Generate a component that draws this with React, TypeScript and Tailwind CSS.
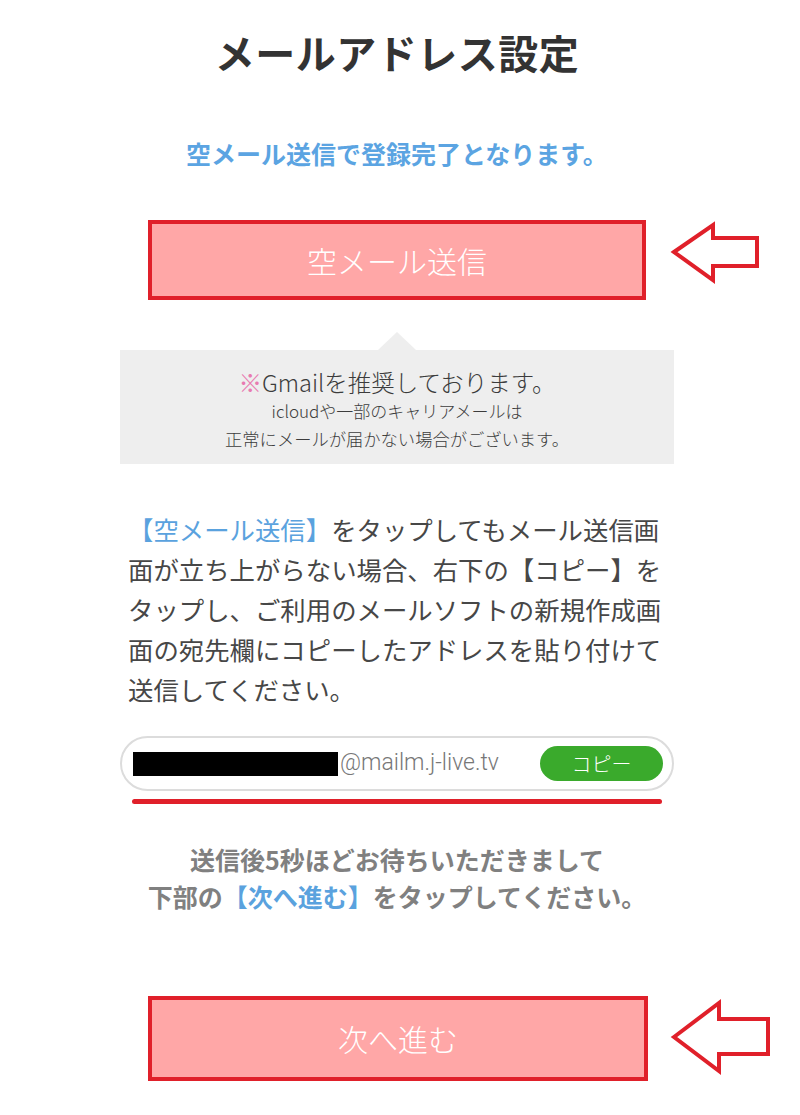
import React from "react";

const jp = { fontFamily: '"Noto Sans CJK JP", "Noto Sans", sans-serif' };

function Arrow1() {
  return (
    <svg width="92" height="80" viewBox="0 0 92 80" className="ml-[24px] shrink-0">
      <polygon
        points="4,32 43,5 43,18 87,18 87,46 43,46 43,60"
        fill="#ffffff"
        stroke="#e0202a"
        strokeWidth="4"
        strokeLinejoin="miter"
      />
    </svg>
  );
}

function Arrow2() {
  return (
    <svg width="102" height="85" viewBox="0 0 102 85" className="ml-[22px] shrink-0">
      <polygon
        points="4,41 49,7 49,23 98,23 98,58 49,58 49,75"
        fill="#ffffff"
        stroke="#e0202a"
        strokeWidth="4"
        strokeLinejoin="miter"
      />
    </svg>
  );
}

export default function App() {
  return (
    <div className="w-[800px] h-[1115px] bg-white overflow-hidden" style={jp}>
      <div className="w-[794px] flex flex-col items-center">
        <h1 className="pt-[28px] text-[40px] leading-[48px] font-bold text-[#333333] tracking-[0.5px]">
          メールアドレス設定
        </h1>
        <p className="mt-[61px] text-[25px] leading-[32px] font-bold text-[#5ba4e2]">
          空メール送信で登録完了となります。
        </p>

        <div className="mt-[51px] w-full flex items-center pl-[148px]">
          <div className="w-[498px] h-[80px] bg-[#ffa7a7] border-[4px] border-[#e0202a] flex items-center justify-center">
            <span className="text-[30px] text-white font-light">空メール送信</span>
          </div>
          <Arrow1 />
        </div>

        <div className="mt-[32px] w-[554px] flex flex-col items-center">
          <div className="w-0 h-0 border-l-[19px] border-r-[19px] border-b-[18px] border-l-transparent border-r-transparent border-b-[#eeeeee]" />
          <div className="w-[554px] bg-[#eeeeee] pt-[17px] pb-[11px] flex flex-col items-center text-[#3c3c3c]">
            <p className="text-[23.5px] leading-[30px] font-light">
              <span className="text-[#e87ab0]">※</span>Gmailを推奨しております。
            </p>
            <p className="text-[17px] leading-[28px] font-light">icloudや一部のキャリアメールは</p>
            <p className="text-[17.3px] leading-[28px] font-light">正常にメールが届かない場合がございます。</p>
          </div>
        </div>

        <div className="mt-[45px] w-[554px] pl-[8px] text-[25.4px] leading-[40px] text-[#474747] whitespace-nowrap">
          <span className="text-[#5aa2de]">【空メール送信】</span>をタップしてもメール送信画
          <br />
          面が立ち上がらない場合、右下の【コピー】を
          <br />
          タップし、ご利用のメールソフトの新規作成画
          <br />
          面の宛先欄にコピーしたアドレスを貼り付けて
          <br />
          送信してください。
        </div>

        <div className="mt-[27px] w-[554px] h-[55px] rounded-full border-2 border-[#dcdcdc] bg-white flex items-center pl-[11px] pr-[9px]">
          <div className="w-[205px] h-[24px] bg-black shrink-0" />
          <span
            className="ml-[2px] text-[23px] text-[#777777] font-light"
            style={{ fontFamily: 'Roboto, "Noto Sans CJK JP", sans-serif' }}
          >
            @mailm.j-live.tv
          </span>
          <div className="ml-auto w-[123px] h-[35px] rounded-full bg-[#3aaa2c] flex items-center justify-center">
            <span className="text-[20px] text-white font-light">コピー</span>
          </div>
        </div>
        <div className="mt-[8px] w-[530px] h-[5px] rounded-full bg-[#e0202a]" />

        <div className="mt-[37px] text-[25px] leading-[37px] font-bold text-[#808080] text-center">
          <p>送信後5秒ほどお待ちいただきまして</p>
          <p>
            下部の<span className="text-[#5aa2de]">【次へ進む】</span>をタップしてください。
          </p>
        </div>

        <div className="mt-[81px] w-full flex items-center pl-[148px]">
          <div className="w-[500px] h-[85px] bg-[#ffa7a7] border-[4px] border-[#e0202a] flex items-center justify-center">
            <span className="text-[30px] text-white font-light">次へ進む</span>
          </div>
          <Arrow2 />
        </div>
      </div>
    </div>
  );
}
